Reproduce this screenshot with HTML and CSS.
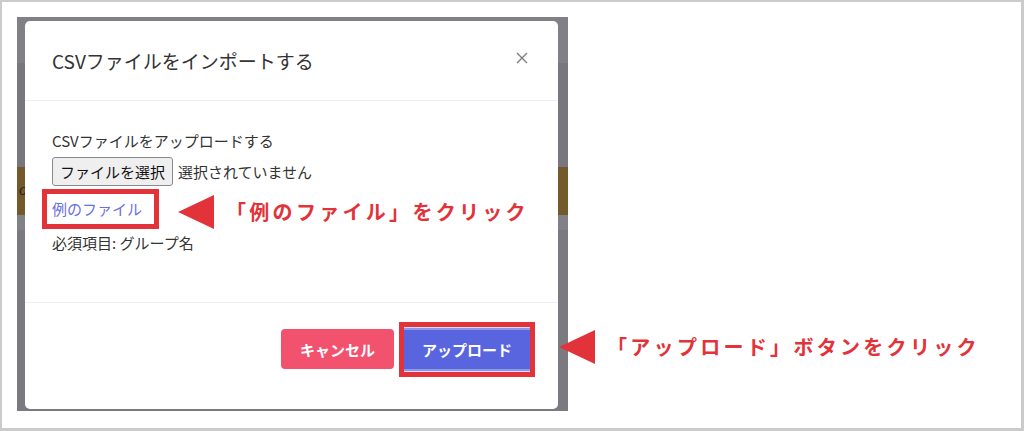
FILE: index.html
```html
<!DOCTYPE html>
<html lang="ja">
<head>
<meta charset="utf-8">
<title>CSVファイルをインポートする</title>
<link rel="stylesheet" href="styles.css">
</head>
<body>
<div class="frame">
  <div class="backdrop">
    <span class="bg-glyph">o</span>
    <div class="modal">
      <div class="modal-header">
        <h1 class="modal-title">CSVファイルをインポートする</h1>
        <button class="close" aria-label="閉じる">
          <svg width="12" height="12" viewBox="0 0 12 12"><path d="M1 1L11 11M11 1L1 11" stroke="#7d7d7d" stroke-width="1.4" fill="none"/></svg>
        </button>
      </div>
      <div class="modal-body">
        <p class="label">CSVファイルをアップロードする</p>
        <div class="file-row">
          <span class="file-btn">ファイルを選択</span>
          <span class="file-name">選択されていません</span>
        </div>
        <div class="hl-link"><a class="sample" href="#">例のファイル</a></div>
        <p class="req">必須項目: グループ名</p>
      </div>
      <div class="modal-footer">
        <button class="btn btn-cancel">キャンセル</button>
        <div class="hl-btn"><button class="btn btn-upload">アップロード</button></div>
      </div>
    </div>
  </div>
</div>
<div class="note note-1"><span class="tri"></span><span class="note-text">「例のファイル」をクリック</span></div>
<div class="note note-2"><span class="tri"></span><span class="note-text">「アップロード」ボタンをクリック</span></div>
</body>
</html>
```
FILE: styles.css
```css
* { box-sizing: border-box; }
html, body { margin: 0; padding: 0; }
body {
  position: relative;
  width: 1024px;
  height: 431px;
  background: #fff;
  font-family: "Noto Sans CJK JP", "Noto Sans", sans-serif;
  color: #333;
  overflow: hidden;
}
.frame {
  width: 1024px;
  height: 431px;
  border: 2px solid #cbcbcb;
  border-right-width: 3px;
  border-bottom-width: 3px;
  padding: 15px 0 0 15px;
}
.backdrop {
  position: relative;
  width: 551px;
  height: 394px;
  padding: 4px 10px 2px 8px;
  background: linear-gradient(to bottom,
    #808086 0, #808086 46px,
    #77777d 46px, #77777d 150px,
    #745a2a 150px, #745a2a 198px,
    #818188 198px, #818188 213px,
    #7a7a80 213px);
}
.bg-glyph {
  position: absolute;
  left: 2px;
  top: 164px;
  font: italic 16px "Liberation Serif", serif;
  color: #222;
}
.modal {
  position: relative;
  width: 533px;
  height: 388px;
  background: #fff;
  border-radius: 5px;
  display: flex;
  flex-direction: column;
}
.modal-header {
  height: 80px;
  border-bottom: 1px solid #eceef0;
  display: flex;
  align-items: center;
  justify-content: space-between;
  padding: 0 30px 0 27px;
}
.modal-title {
  margin: 0;
  font-size: 19px;
  font-weight: 400;
  color: #333;
  line-height: 24px;
}
.close {
  border: 0;
  background: none;
  padding: 0;
  margin-top: -6px;
  width: 12px;
  height: 12px;
  display: flex;
}
.modal-body {
  height: 202px;
  border-bottom: 1px solid #eceef0;
  padding: 30px 27px 0;
  font-size: 15px;
  line-height: 20px;
}
.label { margin: 0 0 6px; color: #333; }
.file-row {
  display: flex;
  align-items: center;
  gap: 5px;
  height: 29px;
}
.file-btn {
  display: flex;
  align-items: center;
  justify-content: center;
  width: 121px;
  height: 29px;
  background: #efefef;
  border: 1px solid #8a8a8a;
  border-radius: 3px;
  color: #111;
  font-size: 15px;
}
.file-name { color: #333; }
.hl-link {
  display: inline-block;
  margin: 3px 0 0 -10px;
  border: 5px solid #e3333a;
  padding: 5px 12px 5px 5px;
}
.sample {
  display: block;
  color: #6a70e4;
  text-decoration: none;
  font-size: 15px;
  line-height: 20px;
}
.req { margin: 4px 0 0; color: #333; }
.modal-footer {
  flex: 1;
  display: flex;
  justify-content: flex-end;
  align-items: flex-start;
  gap: 5px;
  padding: 19px 23px 0 0;
}
.btn {
  border: 0;
  font-family: inherit;
  font-size: 15px;
  font-weight: 700;
  color: #fff;
  border-radius: 4px;
}
.btn-cancel {
  margin-top: 7px;
  width: 113px;
  height: 40px;
  background: #f3526f;
}
.hl-btn {
  border: 5px solid #e3333a;
  padding: 1px 0;
  background: #dcdcf0;
}
.btn-upload {
  display: block;
  width: 126px;
  height: 43px;
  border-radius: 0;
  background: #5865df;
  box-shadow: inset 0 2px 0 #8f97ea, inset 0 -2px 0 #8f97ea;
}
.note {
  position: absolute;
  display: flex;
  align-items: center;
}
.note-1 { left: 178px; top: 195px; }
.note-2 { left: 559px; top: 330px; }
.tri {
  width: 0;
  height: 0;
  border-top: 17.5px solid transparent;
  border-bottom: 17.5px solid transparent;
  border-right: 36px solid #e3333a;
}
.note-text {
  margin-left: 12px;
  color: #e3333a;
  font-size: 20px;
  font-weight: 700;
  letter-spacing: 3.3px;
  line-height: 28px;
}
```
